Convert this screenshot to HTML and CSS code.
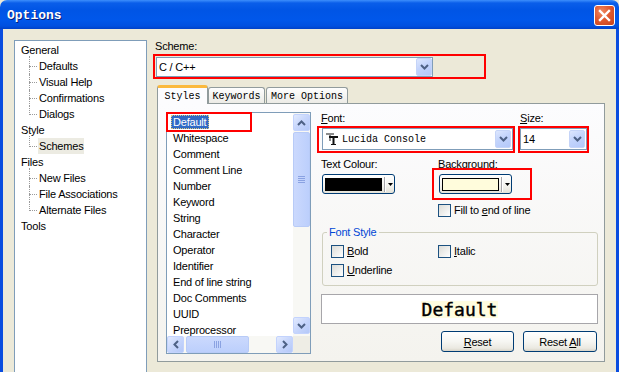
FILE: index.html
```html
<!DOCTYPE html>
<html>
<head>
<meta charset="utf-8">
<link rel="stylesheet" href="styles.css">
</head>
<body>
<div class="window">
  <div class="titlebar">
    <span class="title">Options</span>
    <div class="close"><svg width="13" height="13" viewBox="0 0 13 13"><path d="M2 2L11 11M11 2L2 11" stroke="#fff" stroke-width="2.4" stroke-linecap="square"/></svg></div>
  </div>
  <div class="frame">
    <div class="tree">
      <div class="node">General</div>
      <ul class="kids">
        <li><span>Defaults</span></li>
        <li><span>Visual Help</span></li>
        <li><span>Confirmations</span></li>
        <li><span>Dialogs</span></li>
      </ul>
      <div class="node">Style</div>
      <ul class="kids">
        <li><span class="tsel">Schemes</span></li>
      </ul>
      <div class="node">Files</div>
      <ul class="kids">
        <li><span>New Files</span></li>
        <li><span>File Associations</span></li>
        <li><span>Alternate Files</span></li>
      </ul>
      <div class="node">Tools</div>
    </div>

    <div class="main">
      <div class="lbl">Scheme:</div>
      <div class="combo scheme annot-host">
        <span class="val">C / C++</span>
        <span class="ddbtn"><svg width="9" height="6" viewBox="0 0 9 6"><path d="M1 1l3.5 3.5L8 1" fill="none" stroke="#4d6185" stroke-width="2"/></svg></span>
        <div class="annot a-scheme"></div>
      </div>

      <div class="tabs">
        <div class="tab active">Styles</div>
        <div class="tab t-kw">Keywords</div>
        <div class="tab t-more">More Options</div>
      </div>

      <div class="panel">
        <div class="list annot-host">
          <div class="items">
            <div class="item"><span class="isel">Default</span></div>
            <div class="item"><span>Whitespace</span></div>
            <div class="item"><span>Comment</span></div>
            <div class="item"><span>Comment Line</span></div>
            <div class="item"><span>Number</span></div>
            <div class="item"><span>Keyword</span></div>
            <div class="item"><span>String</span></div>
            <div class="item"><span>Character</span></div>
            <div class="item"><span>Operator</span></div>
            <div class="item"><span>Identifier</span></div>
            <div class="item"><span>End of line string</span></div>
            <div class="item"><span>Doc Comments</span></div>
            <div class="item"><span>UUID</span></div>
            <div class="item"><span>Preprocessor</span></div>
          </div>
          <div class="vscroll">
            <div class="sb"><svg width="9" height="6" viewBox="0 0 9 6"><path d="M1 5l3.5-3.5L8 5" fill="none" stroke="#4d6185" stroke-width="2"/></svg></div>
            <div class="vthumb"><svg width="7" height="7" viewBox="0 0 7 7"><path d="M0 0.5h7M0 2.5h7M0 4.5h7M0 6.5h7" stroke="#8aa2e2" stroke-width="1"/></svg></div>
            <div class="fill"></div>
            <div class="sb sb-down"><svg width="9" height="6" viewBox="0 0 9 6"><path d="M1 1l3.5 3.5L8 1" fill="none" stroke="#4d6185" stroke-width="2"/></svg></div>
          </div>
          <div class="hscroll">
            <div class="sb"><svg width="6" height="9" viewBox="0 0 6 9"><path d="M5 1L1.5 4.5 5 8" fill="none" stroke="#4d6185" stroke-width="2"/></svg></div>
            <div class="hthumb"><svg width="7" height="7" viewBox="0 0 7 7"><path d="M0.5 0v7M2.5 0v7M4.5 0v7M6.5 0v7" stroke="#8aa2e2" stroke-width="1"/></svg></div>
            <div class="fill"></div>
            <div class="sb"><svg width="6" height="9" viewBox="0 0 6 9"><path d="M1 1l3.5 3.5L1 8" fill="none" stroke="#4d6185" stroke-width="2"/></svg></div>
          </div>
          <div class="corner"></div>
          <div class="annot a-default"></div>
        </div>

        <div class="props">
          <div class="row1">
            <div class="fontcol">
              <div class="lbl"><u>F</u>ont:</div>
              <div class="combo fontcombo annot-host">
                <span class="val mono"><svg class="tt" width="12" height="12" viewBox="0 0 12 12"><path d="M0 0h8v2H0zM3 0h2v8H3z" fill="#8c8c8c"/><path d="M3 3h9v2H3zM6.5 3h2v9h-2zM5 11h5v1H5z" fill="#111"/></svg>Lucida Console</span>
                <span class="ddbtn"><svg width="9" height="6" viewBox="0 0 9 6"><path d="M1 1l3.5 3.5L8 1" fill="none" stroke="#4d6185" stroke-width="2"/></svg></span>
                <div class="annot a-font"></div>
              </div>
            </div>
            <div class="sizecol">
              <div class="lbl"><u>S</u>ize:</div>
              <div class="combo sizecombo annot-host">
                <span class="val">14</span>
                <span class="ddbtn"><svg width="9" height="6" viewBox="0 0 9 6"><path d="M1 1l3.5 3.5L8 1" fill="none" stroke="#4d6185" stroke-width="2"/></svg></span>
                <div class="annot a-size"></div>
              </div>
            </div>
          </div>

          <div class="row2">
            <div class="colcol">
              <div class="lbl">Text Colour:</div>
              <div class="cbtn">
                <span class="swatch black"></span><span class="sep"></span>
                <svg width="5" height="3" viewBox="0 0 5 3"><path d="M0 0h5L2.5 3z" fill="#000"/></svg>
              </div>
            </div>
            <div class="bgcol">
              <div class="lbl">Back<u>g</u>round:</div>
              <div class="cbtn annot-host">
                <span class="swatch cream"></span><span class="sep"></span>
                <svg width="5" height="3" viewBox="0 0 5 3"><path d="M0 0h5L2.5 3z" fill="#000"/></svg>
                <div class="annot a-bg"></div>
              </div>
            </div>
          </div>

          <div class="check fillrow"><span class="cb"></span><span>Fill to <u>e</u>nd of line</span></div>

          <fieldset class="group">
            <legend>Font Style</legend>
            <div class="ggrid">
              <div class="check"><span class="cb"></span><span><u>B</u>old</span></div>
              <div class="check"><span class="cb"></span><span><u>I</u>talic</span></div>
              <div class="check"><span class="cb"></span><span><u>U</u>nderline</span></div>
            </div>
          </fieldset>

          <div class="preview"><span>Default</span></div>

          <div class="btns">
            <div class="btn b-reset"><span><u>R</u>eset</span></div>
            <div class="btn b-all"><span>Reset <u>A</u>ll</span></div>
          </div>
        </div>
      </div>
    </div>
  </div>
</div>
</body>
</html>
```

FILE: styles.css
```css
html, body { margin: 0; padding: 0; background: #ece9d8; }
.window {
  width: 619px; height: 372px; overflow: hidden;
  font-family: "Liberation Sans", Arial, sans-serif; font-size: 11px; letter-spacing: -0.2px;
  color: #000; background: #ece9d8;
}
u { text-decoration: underline; text-underline-offset: 1px; }
.mono { font-family: "Liberation Mono", "Courier New", monospace; letter-spacing: 0; }

/* title bar */
.titlebar {
  height: 29px; box-sizing: border-box; display: flex; align-items: center;
  padding: 0 4px 0 7px; border-radius: 7px 7px 0 0;
  background: linear-gradient(to bottom, #3d8ffc 0px, #0a5ee9 3px, #0055e5 10px, #0057ea 20px, #0050e0 26px, #0041c8 29px);
}
.title {
  font-family: "Liberation Mono", monospace; font-weight: bold; font-size: 13px; letter-spacing: 0;
  color: #fff; text-shadow: 1px 1px 0 #0a1e78; margin-top: 1px;
}
.close {
  margin-left: auto; width: 21px; height: 21px; box-sizing: border-box;
  border: 1px solid #fff; border-radius: 3px; margin-top: 1px;
  background: radial-gradient(circle at 35% 30%, #f08a62 0%, #e05a30 45%, #c4401c 100%);
  display: flex; align-items: center; justify-content: center;
}

/* frame */
.frame {
  height: 343px; box-sizing: border-box; display: flex;
  border-left: 3px solid #0a4ddf; border-right: 3px solid #0a4ddf;
  padding: 11px 0 0 11px; background: #ece9d8;
}

/* tree */
.tree {
  width: 133px; height: 345px; flex-shrink: 0; box-sizing: border-box;
  border: 1px solid #7f9db9; background: #fff; padding: 1px 0 0 6px;
  line-height: 16px;
}
.node { height: 16px; }
.kids { list-style: none; margin: 0; padding: 0 0 0 18px; }
.kids li { position: relative; height: 16px; }
.kids li::before {
  content: ""; position: absolute; left: -10px; top: 8px; width: 8px;
  border-top: 1px dotted #9a9a9a;
}
.kids li::after {
  content: ""; position: absolute; left: -10px; top: 0; height: 16px;
  border-left: 1px dotted #9a9a9a;
}
.kids li:first-child::after { top: -2px; height: 18px; }
.kids li:last-child::after { height: 9px; }
.kids li:first-child:last-child::after { height: 11px; }
.kids li span { padding: 0 1px; margin-left: -1px; display: inline-block; height: 16px; }
.kids li span.tsel { background: #ecebe2; }

/* main column */
.main { margin-left: 8px; width: 449px; display: flex; flex-direction: column; }
.lbl { line-height: 13px; height: 13px; white-space: nowrap; }
.annot-host { position: relative; }
.annot { position: absolute; border: 2px solid #f00; box-sizing: border-box; pointer-events: none; }

.combo {
  display: flex; box-sizing: border-box; border: 1px solid #7f9db9; background: #fff;
}
.combo .val { flex: 1; display: flex; align-items: center; padding-left: 2px; white-space: nowrap; }
.ddbtn {
  width: 16px; box-sizing: border-box; display: flex; align-items: center; justify-content: center;
  border: 1px solid #c5d4f8; border-radius: 2px;
  background: linear-gradient(150deg, #dde7fe 0%, #c3d4fc 45%, #b3c8fa 100%);
}
.scheme { width: 277px; height: 20px; margin: 4px 0 0 1px; }
.a-scheme { left: -4px; top: -4px; width: 333px; height: 25px; }

/* tabs */
.tabs { display: flex; align-items: flex-end; height: 18px; margin: 8px 0 0 2px; position: relative; z-index: 1; }
.tab {
  height: 16px; box-sizing: border-box; border: 1px solid #919b9c; border-bottom: none;
  border-radius: 3px 3px 0 0; background: linear-gradient(#fefefe, #ecebe6);
  display: flex; align-items: center; justify-content: center;
  font-family: "Liberation Mono", monospace; font-size: 10px; letter-spacing: 0; padding-top: 1px;
}
.tab.active {
  width: 51px; height: 19px; margin-bottom: -1px; background: #fcfcfe;
  border-top: 3px solid #fbb93c; padding-top: 0;
}
.t-kw { width: 57px; }
.t-more { width: 82px; margin-left: 1px; }

.panel {
  width: 448px; height: 259px; margin-left: 2px; box-sizing: border-box;
  border: 1px solid #919b9c; background: linear-gradient(#fcfcfe, #f4f3ee);
  padding: 8px 6px 0 8px; display: flex; gap: 10px;
}

/* list */
.list {
  width: 145px; height: 242px; box-sizing: border-box; flex-shrink: 0;
  border: 1px solid #7f9db9; background: #fff;
  display: grid; grid-template-columns: 1fr 17px; grid-template-rows: 1fr 17px;
}
.items { overflow: hidden; padding-top: 1px; }
.item { height: 16px; line-height: 16px; padding-left: 4px; white-space: nowrap; }
.item span { padding: 0 2px; display: inline-block; height: 16px; }
.item span.isel { background: #316ac5; color: #fff; height: 14px; line-height: 14px; margin-top: 1px; outline: 1px dotted #d8c880; outline-offset: -1px; padding: 0 3px 0 2px; }
.a-default { left: -1px; top: -1px; width: 86px; height: 20px; }

.sb {
  width: 17px; height: 17px; box-sizing: border-box; flex-shrink: 0;
  border: 1px solid #c3d3fd; border-radius: 2px;
  background: linear-gradient(135deg, #e2eafe 0%, #c7d6fc 50%, #b4c8f8 100%);
  display: flex; align-items: center; justify-content: center;
}
.vscroll { display: flex; flex-direction: column; background: #f8f8f4; padding-top: 1px; }
.vthumb {
  height: 95px; margin-top: 1px; box-sizing: border-box; border: 1px solid #b8cbf7; border-radius: 2px;
  background: linear-gradient(90deg, #cbd9fd, #bccffc);
  display: flex; align-items: center; justify-content: center;
}
.fill { flex: 1; }
.sb-down { margin-bottom: 2px; }
.hscroll { display: flex; background: #f8f8f4; }
.hthumb {
  width: 63px; margin-left: 2px; box-sizing: border-box; border: 1px solid #b8cbf7; border-radius: 2px;
  background: linear-gradient(#cbd9fd, #bccffc);
  display: flex; align-items: center; justify-content: center;
}
.corner { background: #eeede5; }

/* props */
.props { width: 277px; display: flex; flex-direction: column; }
.row1 { display: flex; }
.fontcol { width: 192px; margin-right: 7px; }
.fontcombo { width: 191px; height: 22px; margin: 3px 0 0 1px; padding: 1px 1px 1px 0; }
.fontcombo .val { font-size: 10px; padding-left: 3px; }
.tt { margin-right: 4px; }
.sizecombo { width: 67px; height: 22px; margin-top: 3px; padding: 1px 1px 1px 0; }
.a-font { left: -6px; top: -3px; width: 198px; height: 27px; }
.a-size { left: -3px; top: -3px; width: 71px; height: 27px; }

.row2 { display: flex; margin-top: 8px; }
.colcol { width: 117px; }
.cbtn {
  width: 73px; height: 20px; box-sizing: border-box; margin: 3px 0 0 1px;
  border: 1px solid #003c74; border-radius: 3px;
  background: linear-gradient(#ffffff, #f4f3ee 60%, #e4e2d8);
  display: flex; align-items: center; padding-left: 2px;
}
.swatch { width: 57px; height: 13px; box-sizing: border-box; border: 1px solid #000; }
.swatch.black { background: #000; }
.swatch.cream { background: #fffcdc; }
.sep { width: 1px; height: 15px; background: #a7a6aa; margin: 0 3px 0 2px; box-shadow: 1px 0 0 #fff; }
.a-bg { left: -8px; top: -7px; width: 100px; height: 32px; }

.check { display: flex; align-items: center; height: 13px; line-height: 13px; white-space: nowrap; }
.cb {
  width: 13px; height: 13px; box-sizing: border-box; flex-shrink: 0; margin-right: 3px;
  border: 1px solid #1c5180; background: linear-gradient(135deg, #dcdcd7, #ffffff);
}
.fillrow { margin: 10px 0 0 117px; }

.group {
  margin: 9px 0 0 1px; width: 276px; min-width: 0; box-sizing: border-box;
  border: 1px solid #d0d0bf; border-radius: 3px; padding: 6px 8px 8px 8px;
}
.group legend { color: #0046d5; padding: 0 2px; margin-left: -4px; line-height: 13px; }
.ggrid { display: grid; grid-template-columns: 107px 1fr; row-gap: 6px; }

.preview {
  margin-top: 8px; height: 30px; box-sizing: border-box; border: 1px solid #a7a6aa; background: #fff;
  display: flex; align-items: center; justify-content: center;
}
.preview span {
  font-family: "DejaVu Sans Mono", monospace; font-size: 18px; letter-spacing: 0;
  line-height: 17px; background: #fffde0; padding: 0 1px;
  -webkit-text-stroke: 0.4px #000;
}

.btns { display: flex; justify-content: flex-end; gap: 9px; margin-top: 7px; padding-right: 1px; }
.btn {
  height: 21px; box-sizing: border-box; border: 1px solid #003c74; border-radius: 3px;
  background: linear-gradient(#ffffff, #f6f6f2 50%, #ebe9e1 85%, #d8d4c8);
  display: flex; align-items: center; justify-content: center;
}
.b-reset { width: 73px; }
.b-all { width: 74px; }
```
